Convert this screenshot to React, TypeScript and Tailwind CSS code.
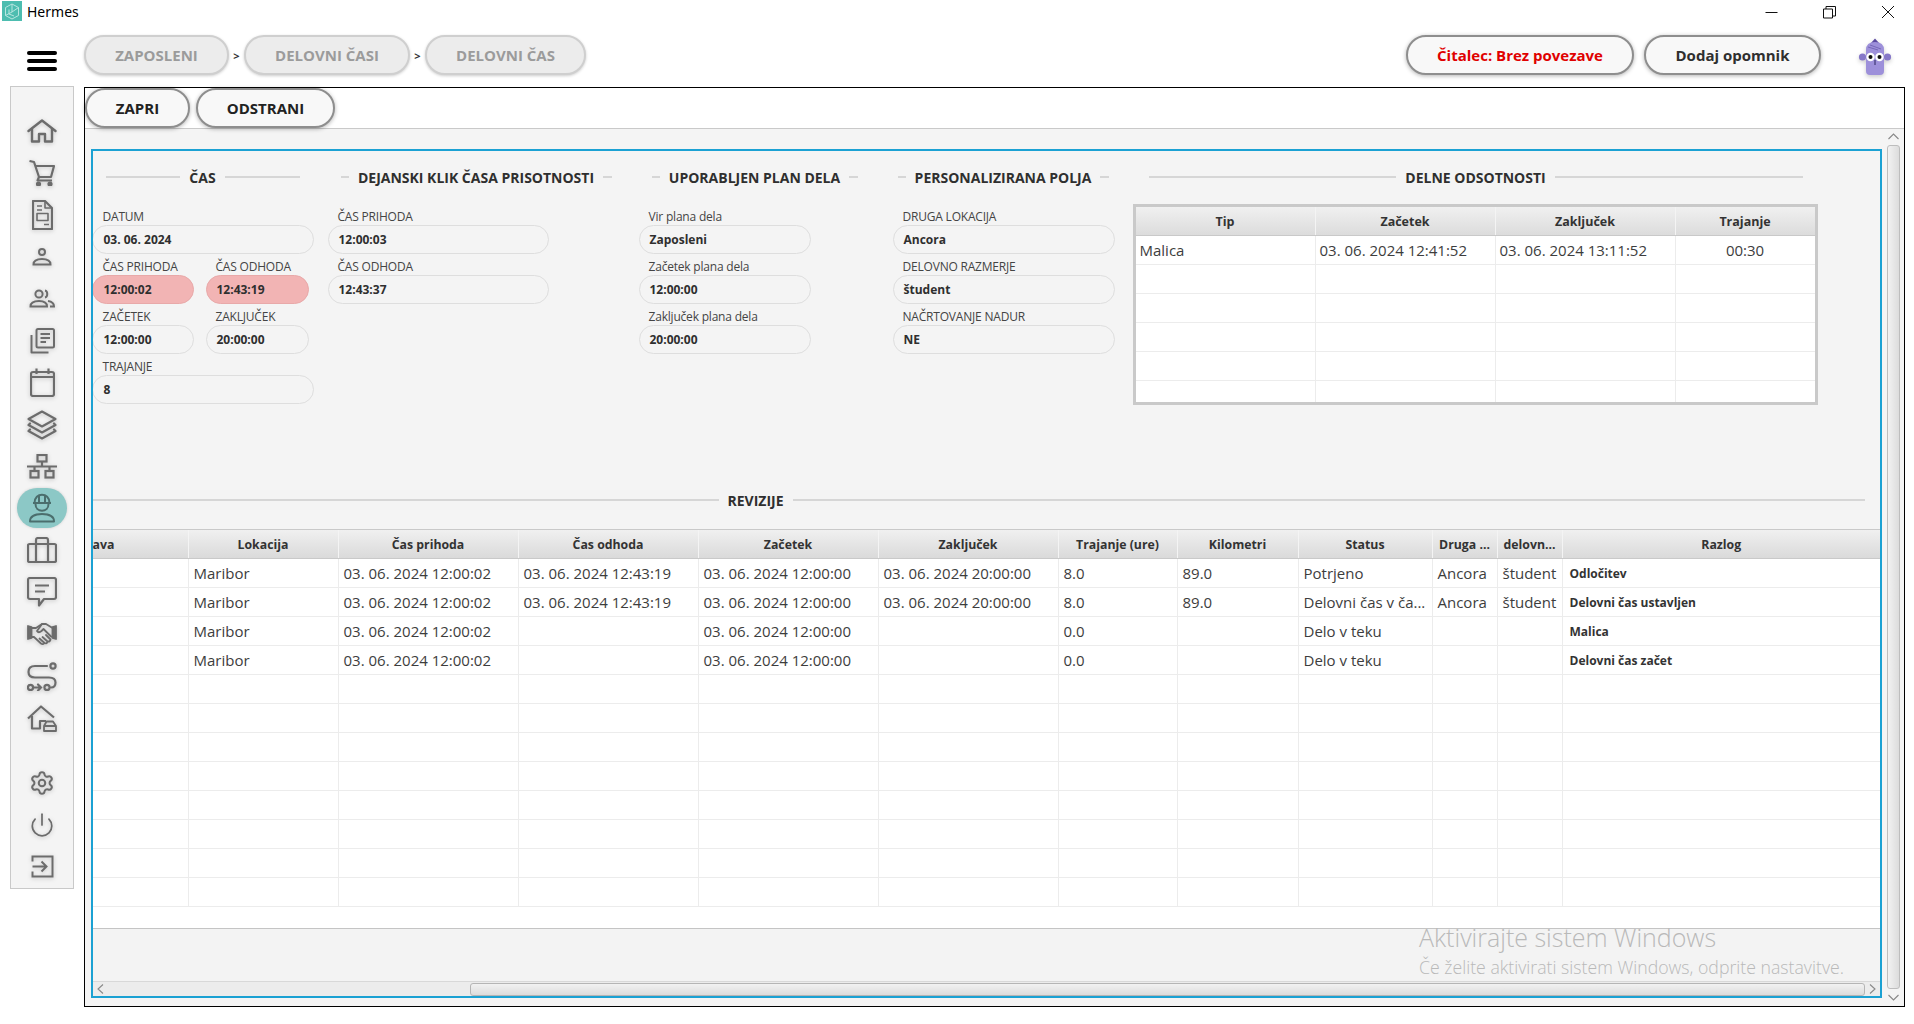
import React from "react";
import { Settings, Power } from "lucide-react";

const ic = "fill-none stroke-[#6c6c6c] drop-shadow-[0_1px_2px_rgba(0,0,0,0.2)]";

const Home = () => (
  <svg width="30" height="24" viewBox="0 0 30 24" className={ic} strokeWidth="2.4" strokeLinejoin="round" strokeLinecap="round">
    <path d="M1.5 12 L15 1.5 L28.5 12" />
    <path d="M5 10 V22.5 H12 V15 H18 V22.5 H25 V10" />
  </svg>
);
const Cart = () => (
  <svg width="26" height="26" viewBox="0 0 26 26" className={ic} strokeWidth="2.2" strokeLinejoin="round">
    <path d="M0.5 1 L5 2 L10 17 H22 L25 6 H7" />
    <path d="M10 17 L8.5 20.5 H23" />
    <circle cx="9.5" cy="24" r="1.5" className="fill-[#6c6c6c]" />
    <circle cx="21" cy="24" r="1.5" className="fill-[#6c6c6c]" />
  </svg>
);
const Doc = () => (
  <svg width="21" height="30" viewBox="0 0 21 30" className={ic} strokeWidth="2.2" strokeLinejoin="round">
    <path d="M1 1 H13 L20 8 V29 H1 Z" />
    <path d="M13 1 V8 H20" strokeWidth="1.6" />
    <path d="M5 6 H10 M5 10 H10 M12 24.5 H17" strokeWidth="1.6" />
    <rect x="5" y="13.5" width="11" height="7" strokeWidth="1.6" />
  </svg>
);
const UserI = () => (
  <svg width="20" height="18" viewBox="0 0 20 18" className={ic} strokeWidth="2">
    <circle cx="10" cy="4" r="3" />
    <path d="M1.5 16.5 C1.5 12 6 11 10 11 C14 11 18.5 12 18.5 16.5 Z" />
  </svg>
);
const UsersI = () => (
  <svg width="26" height="19" viewBox="0 0 26 19" className={ic} strokeWidth="2">
    <circle cx="10" cy="5" r="3.6" />
    <path d="M16 1.5 C19 2 19 8 16 8.5" />
    <path d="M1.5 17.5 C1.5 13 6 12 10 12 C14 12 18 13 18 17.5 Z" />
    <path d="M19 12 C22 12.5 25 14 25 17.5 H21" />
  </svg>
);
const Pages = () => (
  <svg width="25" height="26" viewBox="0 0 25 26" className={ic} strokeWidth="2" strokeLinejoin="round">
    <rect x="6.5" y="1" width="17.5" height="18.5" rx="1.5" />
    <path d="M1.5 7 V24.5 H18.5" />
    <path d="M10.5 6 H20 M10.5 10 H20 M10.5 14 H16" />
  </svg>
);
const Calendar = () => (
  <svg width="25" height="29" viewBox="0 0 25 29" className={ic} strokeWidth="2.2" strokeLinejoin="round">
    <rect x="1" y="4" width="23" height="24" rx="2" />
    <path d="M1 9 H24 M6.5 0.5 V6 M18.5 0.5 V6" />
  </svg>
);
const Layers = () => (
  <svg width="30" height="30" viewBox="0 0 30 30" className={ic} strokeWidth="2.2" strokeLinejoin="round" strokeLinecap="round">
    <path d="M15 1.5 L28.5 9 L15 16.5 L1.5 9 Z" />
    <path d="M3 13.5 L1.5 15 L15 22.5 L28.5 15 L27 13.5" />
    <path d="M3 19.5 L1.5 21 L15 28.5 L28.5 21 L27 19.5" />
  </svg>
);
const Network = () => (
  <svg width="30" height="25" viewBox="0 0 30 25" className={ic} strokeWidth="2.2">
    <rect x="10.5" y="1" width="9" height="6.5" />
    <path d="M15 7.5 V12.5 M0 12.5 H30 M7.5 12.5 V17 M22.5 12.5 V17" />
    <rect x="3.5" y="17" width="8" height="6.5" />
    <rect x="18.5" y="17" width="8" height="6.5" />
  </svg>
);
const Worker = () => (
  <svg width="28" height="30" viewBox="0 0 28 30" className="fill-none stroke-[#4b6e6d]" strokeWidth="2" strokeLinejoin="round">
    <path d="M6.5 10 C6.5 -1 21.5 -1 21.5 10" />
    <path d="M5 10 H23 M11 2 V9 M17 2 V9" />
    <path d="M7.5 11 C7.5 20 20.5 20 20.5 11" />
    <path d="M2 28.5 C2 22.5 8 21 14 21 C20 21 26 22.5 26 28.5 Z" />
  </svg>
);
const Case = () => (
  <svg width="30" height="26" viewBox="0 0 30 26" className={ic} strokeWidth="2.2" strokeLinejoin="round">
    <rect x="1" y="7" width="28" height="18" rx="1.5" />
    <path d="M9 7 V3 Q9 1 11 1 H19 Q21 1 21 3 V7 M9 7 V25 M21 7 V25" />
  </svg>
);
const Chat = () => (
  <svg width="30" height="30" viewBox="0 0 30 30" className={ic} strokeWidth="2.2" strokeLinejoin="round">
    <path d="M3 1 H27 Q29 1 29 3 V20 Q29 22 27 22 H17 L12 28.5 V22 H3 Q1 22 1 20 V3 Q1 1 3 1 Z" />
    <path d="M8 8.5 H22 M8 14.5 H18" />
  </svg>
);
const Shake = () => (
  <svg width="30" height="24" viewBox="0 0 30 24" className={ic} strokeWidth="1.8" strokeLinejoin="round" strokeLinecap="round">
    <path d="M1 4 L4.5 5 V16 L1 17 Z M29 4 L25.5 5 V16 L29 17 Z" className="fill-[#6c6c6c]" />
    <path d="M4.5 6 H9 L15 2 H19 L25.5 6" />
    <path d="M15 2 L10 9 Q11.5 11.5 14.5 9 L16.5 7 L24 14.5 L25.5 15" />
    <path d="M4.5 15 H7 L14 21.5 Q16 23 17.5 21 L12.5 16.5 M17.5 21 Q20 22 20.5 19.5 L15.5 15 M20.5 19.5 Q23 20 23.5 17.5 L19 13" />
  </svg>
);
const RouteI = () => (
  <svg width="30" height="29" viewBox="0 0 30 29" className={ic} strokeWidth="2.2" strokeLinecap="round">
    <circle cx="26" cy="4" r="2.6" />
    <path d="M20 4 H8 C3 4 1.5 7 1.5 10 C1.5 14 4 15.5 8 15.5 H22 C26.5 15.5 28.5 17.5 28.5 20.5 C28.5 24 26.5 25.5 24 25.5" />
    <circle cx="20" cy="25.5" r="2.6" />
    <circle cx="3.5" cy="25.5" r="2.6" />
    <path d="M7 25.5 H14 M11 22.5 L14 25.5 L11 28.5" />
  </svg>
);
const Garage = () => (
  <svg width="30" height="27" viewBox="0 0 30 27" className={ic} strokeWidth="2.2" strokeLinejoin="round">
    <path d="M1 13.5 L14 1.5 L27 12.5" />
    <path d="M5 11 V23.5 H13 V16 H19" />
    <path d="M17 26 V21 L19.5 16.5 H26 L29 21 V26 Z M17 21 H29" strokeWidth="1.8" />
  </svg>
);
const Exit = () => (
  <svg width="23" height="23" viewBox="0 0 23 23" className={ic} strokeWidth="2">
    <path d="M1.5 6.5 V1.5 H21.5 V21.5 H1.5 V16.5" />
    <path d="M1.5 11.5 H15 M10.5 6.5 L15.5 11.5 L10.5 16.5" />
  </svg>
);

const Avatar = () => (
  <svg width="34" height="38" viewBox="0 0 34 38" className="drop-shadow-[0_2px_2px_rgba(0,0,0,0.2)]">
    <path d="M13 5 L17 0.5 L21 5 Z" fill="#5b4aa0" />
    <circle cx="4.5" cy="19" r="3.6" fill="#8678c8" />
    <circle cx="29.5" cy="19" r="3.6" fill="#8678c8" />
    <path d="M8 12 Q8 4 17 4 Q26 4 26 12 V33 Q26 37 22 37 H12 Q8 37 8 33 Z" fill="#9d90da" />
    <path d="M10 9 L20 12 M12 7 L23 11" stroke="#7667b8" strokeWidth="1" />
    <circle cx="12.5" cy="19" r="4.2" fill="#fff" />
    <circle cx="21.5" cy="19" r="4.2" fill="#fff" />
    <circle cx="12.5" cy="19" r="2" fill="#111" />
    <circle cx="21.5" cy="19" r="2" fill="#111" />
    <path d="M17 22 V27" stroke="#2d2660" strokeWidth="1" />
  </svg>
);

const Logo = () => (
  <div className="w-5 h-5 bg-[#4dbdb0] flex items-center justify-center">
    <svg width="16" height="17" viewBox="0 0 16 17" fill="none" stroke="#b8e6e0" strokeWidth="1">
      <path d="M8 1 L14.5 4.5 V12.5 L8 16 L1.5 12.5 V4.5 Z M8 1 V9 M1.5 12.5 L8 9 L14.5 4.5 M5 6.5 V11 L10 13" />
    </svg>
  </div>
);

const Crumb = ({ label, w }: { label: string; w: string }) => (
  <div className={`${w} h-10 rounded-full bg-[#ececec] border-2 border-[#cfcfcf] flex items-center justify-center text-[15px] font-bold text-[#9b9b9b] shadow-[0_1px_3px_rgba(0,0,0,0.2)]`}>
    {label}
  </div>
);
const Chevron = () => <div className="w-[15px] text-center text-[11px] font-bold text-[#333] leading-none">&gt;</div>;

const ActionBtn = ({ label, w, cls }: { label: string; w: string; cls: string }) => (
  <div className={`${w} shrink-0 rounded-full bg-[#f8f8f8] border-2 border-[#8e8e8e] flex items-center justify-center text-[15px] font-bold shadow-[0_1px_4px_rgba(0,0,0,0.3)] ${cls}`}>
    {label}
  </div>
);

const Section = ({ title, cls }: { title: string; cls: string }) => (
  <div className={`flex items-center gap-[9px] h-[18px] ${cls}`}>
    <span className="h-[1.5px] flex-1 bg-[#d6d6d6]" />
    <span className="text-[14px] font-bold text-[#2f2f2f] whitespace-nowrap">{title}</span>
    <span className="h-[1.5px] flex-1 bg-[#d6d6d6]" />
  </div>
);

const Field = ({ label, value, w, red, first }: { label: string; value: string; w: string; red?: boolean; first?: boolean }) => (
  <div className={`${w} flex flex-col`}>
    <div className={`h-[21px] pt-[4px] flex items-center text-[12px] text-[#444] whitespace-nowrap tracking-[-0.2px] ${first ? "pl-[11px]" : "pl-[10px]"}`}>{label}</div>
    <div
      className={`h-[29px] rounded-full border-[1.5px] flex items-center text-[12px] font-bold text-[#2f2f2f] ${first ? "pl-[11px]" : "pl-[10px]"} ${
        red ? "bg-[#f2b4b4] border-[#e8a9a9]" : "bg-[#f4f4f4] border-[#dedede]"
      }`}
    >
      {value}
    </div>
  </div>
);

const Abs = () => {
  const rows: string[][] = [
    ["Malica", "03. 06. 2024 12:41:52", "03. 06. 2024 13:11:52", "00:30"],
    ["", "", "", ""],
    ["", "", "", ""],
    ["", "", "", ""],
    ["", "", "", ""],
    ["", "", "", ""],
  ];
  const grid = "grid grid-cols-[180px_180px_180px_139px]";
  return (
    <div className="w-[685px] h-[201px] mt-[4px] border-[3px] border-[#c9c9c9] bg-white overflow-hidden">
      <div className={`${grid} h-[29px] bg-gradient-to-b from-[#f0f0f0] to-[#dcdcdc] border-b border-[#c9c9c9]`}>
        {["Tip", "Začetek", "Zaključek", "Trajanje"].map((h) => (
          <div key={h} className="flex items-center justify-center pt-[2px] text-[12.5px] font-bold text-[#333] border-r border-[#f4f4f4] last:border-r-0">
            {h}
          </div>
        ))}
      </div>
      {rows.map((r, i) => (
        <div key={i} className={`${grid} h-[29px] border-b border-[#ececec]`}>
          {r.map((c, j) => (
            <div key={j} className={`flex items-center text-[15px] text-[#3d3d3d] border-r border-[#ececec] last:border-r-0 ${j === 3 ? "justify-center" : "pl-[4px]"}`}>
              {c}
            </div>
          ))}
        </div>
      ))}
    </div>
  );
};

const cols = "grid grid-cols-[96px_150px_180px_180px_180px_180px_119px_121px_134px_65px_65px_1fr]";
const heads = ["Lokacija", "Čas prihoda", "Čas odhoda", "Začetek", "Zaključek", "Trajanje (ure)", "Kilometri", "Status", "Druga ...", "delovn...", "Razlog"];
const d = "03. 06. 2024";
const data: string[][] = [
  ["Maribor", `${d} 12:00:02`, `${d} 12:43:19`, `${d} 12:00:00`, `${d} 20:00:00`, "8.0", "89.0", "Potrjeno", "Ancora", "študent", "Odločitev"],
  ["Maribor", `${d} 12:00:02`, `${d} 12:43:19`, `${d} 12:00:00`, `${d} 20:00:00`, "8.0", "89.0", "Delovni čas v ča...", "Ancora", "študent", "Delovni čas ustavljen"],
  ["Maribor", `${d} 12:00:02`, "", `${d} 12:00:00`, "", "0.0", "", "Delo v teku", "", "", "Malica"],
  ["Maribor", `${d} 12:00:02`, "", `${d} 12:00:00`, "", "0.0", "", "Delo v teku", "", "", "Delovni čas začet"],
  ...Array.from({ length: 8 }, () => Array(11).fill("")),
];

const Revisions = () => (
  <div className="mt-5 h-[400px] shrink-0 bg-white border-b-[1.5px] border-[#c4c4c4] overflow-hidden">
    <div className={`${cols} h-[30px] bg-gradient-to-b from-[#f0f0f0] to-[#dadada] border-y border-[#c9c9c9]`}>
      <div className="flex items-center pt-[2px] border-r border-[#f4f4f4] text-[12.3px] font-bold text-[#333]">ava</div>
      {heads.map((h) => (
        <div key={h} className="flex items-center justify-center pt-[2px] border-r border-[#f4f4f4] last:border-r-0 text-[12.3px] font-bold text-[#333] whitespace-nowrap">
          {h}
        </div>
      ))}
    </div>
    {data.map((r, i) => (
      <div key={i} className={`${cols} h-[29px] border-b border-[#ececec]`}>
        <div className="border-r border-[#ececec]" />
        {r.map((c, j) => (
          <div
            key={j}
            className={`flex items-center border-r border-[#ececec] last:border-r-0 whitespace-nowrap overflow-hidden ${
              j === 10 ? "text-[12px] font-bold text-[#333] pl-[7px] pt-[1px]" : "text-[15px] text-[#3d3d3d] pl-[5px]"
            }`}
          >
            {c}
          </div>
        ))}
      </div>
    ))}
  </div>
);

const side: [React.ReactNode, boolean?][] = [
  [<Home />],
  [<Cart />],
  [<Doc />],
  [<UserI />],
  [<UsersI />],
  [<Pages />],
  [<Calendar />],
  [<Layers />],
  [<Network />],
  [<Worker />, true],
  [<Case />],
  [<Chat />],
  [<Shake />],
  [<RouteI />],
  [<Garage />],
];

const SideItem = ({ children, active }: { children: React.ReactNode; active?: boolean }) => (
  <div className="h-[42px] w-full flex items-center justify-center">
    {active ? <div className="w-[50px] h-10 rounded-full bg-[#8cc8c6] flex items-center justify-center shadow-[0_0_3px_rgba(0,0,0,0.15)]">{children}</div> : children}
  </div>
);

export default function App() {
  return (
    <div className="w-[1914px] h-[1024px] bg-white overflow-hidden relative flex flex-col [font-family:'Open_Sans',sans-serif]">
      {/* title bar */}
      <div className="h-[30px] shrink-0 flex items-start relative">
        <div className="ml-[2px] mt-px"><Logo /></div>
        <div className="ml-[5px] mt-[2px] text-[14px] leading-[20px] text-black [font-family:'Noto_Sans',sans-serif]">Hermes</div>
        <div className="ml-auto flex items-center mt-[4px] mr-[19px] gap-[45px] h-[16px]">
          <svg width="13" height="13" viewBox="0 0 13 13" stroke="#111" strokeWidth="1" fill="none"><path d="M0.5 6.5 H12.5" /></svg>
          <svg width="13" height="13" viewBox="0 0 13 13" stroke="#111" strokeWidth="1" fill="none"><path d="M0.5 3 H9.5 V12 H0.5 Z M3 3 V0.5 H12.5 V10 H9.5" /></svg>
          <svg width="14" height="14" viewBox="0 0 14 14" stroke="#111" strokeWidth="1" fill="none"><path d="M1 1 L13 13 M13 1 L1 13" /></svg>
        </div>
      </div>
      {/* header */}
      <div className="h-[57px] shrink-0 flex items-start pt-[5px]">
        <div className="ml-[27px] w-[30px] mt-[16px] flex flex-col gap-[4px]">
          <div className="h-[4px] rounded-full bg-black" />
          <div className="h-[4px] rounded-full bg-black" />
          <div className="h-[4px] rounded-full bg-black" />
        </div>
        <div className="ml-[27px] flex items-center">
          <Crumb label="ZAPOSLENI" w="w-[145px]" />
          <Chevron />
          <Crumb label="DELOVNI ČASI" w="w-[166px]" />
          <Chevron />
          <Crumb label="DELOVNI ČAS" w="w-[161px]" />
        </div>
        <div className="ml-auto flex items-center h-10">
          <ActionBtn label="Čitalec: Brez povezave" w="w-[228px] h-10" cls="text-[#e00000]" />
          <ActionBtn label="Dodaj opomnik" w="w-[177px] h-10 ml-[10px]" cls="text-[#2f2f2f]" />
          <div className="ml-[37px] mr-[22px] mt-[3px]"><Avatar /></div>
        </div>
      </div>
      {/* body */}
      <div className="flex-1 flex items-start min-h-0">
        <div className="ml-[10px] mt-[-1px] w-[64px] h-[803px] bg-[#f4f4f4] border border-[#c9c9c9] flex flex-col pt-[23px] shrink-0">
          {side.map(([n, a], i) => (
            <SideItem key={i} active={a}>{n}</SideItem>
          ))}
          <div className="h-[23px] shrink-0" />
          <SideItem><Settings size={26} strokeWidth={1.9} className={ic} /></SideItem>
          <SideItem><Power size={26} strokeWidth={1.6} className={ic} /></SideItem>
          <SideItem><Exit /></SideItem>
        </div>
        <div className="ml-[10px] w-[1821px] h-[920px] border-[1.5px] border-black flex flex-col bg-[#f4f4f4] shrink-0">
          <div className="h-[41px] shrink-0 bg-white border-b-[1.5px] border-[#c9c9c9] flex items-start gap-[6px]">
            <ActionBtn label="ZAPRI" w="w-[105px] h-[39.5px]" cls="text-[#222]" />
            <ActionBtn label="ODSTRANI" w="w-[139px] h-[39.5px]" cls="text-[#222]" />
          </div>
          <div className="flex-1 flex min-h-0">
            <div className="flex-1 pl-[5.5px] pt-[20px] pb-[6px] min-w-0">
              <div className="h-[849px] border-2 border-[#1ba1d3] bg-[#f4f4f4] flex flex-col overflow-hidden">
                <div className="h-[340px] shrink-0 flex items-start pt-[17px]">
                  <div className="w-[222px] -ml-px shrink-0">
                    <Section title="ČAS" cls="mx-[14px]" />
                    <div className="mt-[18px] flex flex-col">
                      <Field first label="DATUM" value="03. 06. 2024" w="w-[222px]" />
                      <div className="flex gap-[12px]">
                        <Field first label="ČAS PRIHODA" value="12:00:02" w="w-[102px]" red />
                        <Field label="ČAS ODHODA" value="12:43:19" w="w-[103px]" red />
                      </div>
                      <div className="flex gap-[12px]">
                        <Field first label="ZAČETEK" value="12:00:00" w="w-[102px]" />
                        <Field label="ZAKLJUČEK" value="20:00:00" w="w-[103px]" />
                      </div>
                      <Field first label="TRAJANJE" value="8" w="w-[222px]" />
                    </div>
                  </div>
                  <div className="w-[221px] ml-[14px] shrink-0">
                    <Section title="DEJANSKI KLIK ČASA PRISOTNOSTI" cls="ml-[13px] w-[271px]" />
                    <div className="mt-[18px] flex flex-col">
                      <Field label="ČAS PRIHODA" value="12:00:03" w="w-[221px]" />
                      <Field label="ČAS ODHODA" value="12:43:37" w="w-[221px]" />
                    </div>
                  </div>
                  <div className="w-[172px] ml-[90px] shrink-0">
                    <Section title="UPORABLJEN PLAN DELA" cls="ml-[13px] w-[206px]" />
                    <div className="mt-[18px] flex flex-col">
                      <Field label="Vir plana dela" value="Zaposleni" w="w-[172px]" />
                      <Field label="Začetek plana dela" value="12:00:00" w="w-[172px]" />
                      <Field label="Zaključek plana dela" value="20:00:00" w="w-[172px]" />
                    </div>
                  </div>
                  <div className="w-[222px] ml-[82px] shrink-0">
                    <Section title="PERSONALIZIRANA POLJA" cls="ml-[5px] w-[211px]" />
                    <div className="mt-[18px] flex flex-col">
                      <Field label="DRUGA LOKACIJA" value="Ancora" w="w-[222px]" />
                      <Field label="DELOVNO RAZMERJE" value="študent" w="w-[222px]" />
                      <Field label="NAČRTOVANJE NADUR" value="NE" w="w-[222px]" />
                    </div>
                  </div>
                  <div className="w-[685px] ml-[18px] shrink-0">
                    <Section title="DELNE ODSOTNOSTI" cls="ml-[16px] w-[654px]" />
                    <div className="mt-[18px]"><Abs /></div>
                  </div>
                </div>
                <div className="flex items-center gap-[9px] h-[18px] w-[1772px] shrink-0">
                  <span className="h-[1.5px] w-[626px] bg-[#d6d6d6]" />
                  <span className="text-[14px] font-bold text-[#2f2f2f] whitespace-nowrap">REVIZIJE</span>
                  <span className="h-[1.5px] flex-1 bg-[#d6d6d6]" />
                </div>
                <Revisions />
                <div className="flex-1 bg-[#f3f3f3]" />
                <div className="h-[15px] shrink-0 bg-[#ececec] border-t border-[#d8d8d8] flex items-center">
                  <svg width="7" height="10" viewBox="0 0 7 10" fill="none" stroke="#888" strokeWidth="1.1" className="ml-[4px]"><path d="M6 0.5 L1 5 L6 9.5" /></svg>
                  <div className="ml-[366px] w-[1395px] h-[13px] rounded-[3px] bg-gradient-to-b from-[#f2f2f2] to-[#dcdcdc] border border-[#b5b5b5]" />
                  <svg width="7" height="10" viewBox="0 0 7 10" fill="none" stroke="#888" strokeWidth="1.1" className="ml-[4px]"><path d="M1 0.5 L6 5 L1 9.5" /></svg>
                </div>
              </div>
            </div>
            <div className="w-[22px] shrink-0 flex flex-col items-center pt-[4px] bg-[#f4f4f4]">
              <svg width="11" height="7" viewBox="0 0 11 7" fill="none" stroke="#888" strokeWidth="1.1"><path d="M0.5 6 L5.5 1 L10.5 6" /></svg>
              <div className="mt-[5px] w-[13px] h-[844px] rounded-[3px] bg-gradient-to-r from-[#f2f2f2] to-[#dcdcdc] border border-[#bdbdbd]" />
              <svg width="11" height="7" viewBox="0 0 11 7" fill="none" stroke="#888" strokeWidth="1.1" className="mt-[5px]"><path d="M0.5 1 L5.5 6 L10.5 1" /></svg>
            </div>
          </div>
        </div>
      </div>
      {/* activation watermark */}
      <div className="absolute left-[1419px] top-[921px] text-[#b9b9b9] font-light pointer-events-none whitespace-nowrap">
        <div className="text-[25px] leading-[32px]">Aktivirajte sistem Windows</div>
        <div className="text-[17.7px] leading-[24px] mt-[2px]">Če želite aktivirati sistem Windows, odprite nastavitve.</div>
      </div>
    </div>
  );
}
